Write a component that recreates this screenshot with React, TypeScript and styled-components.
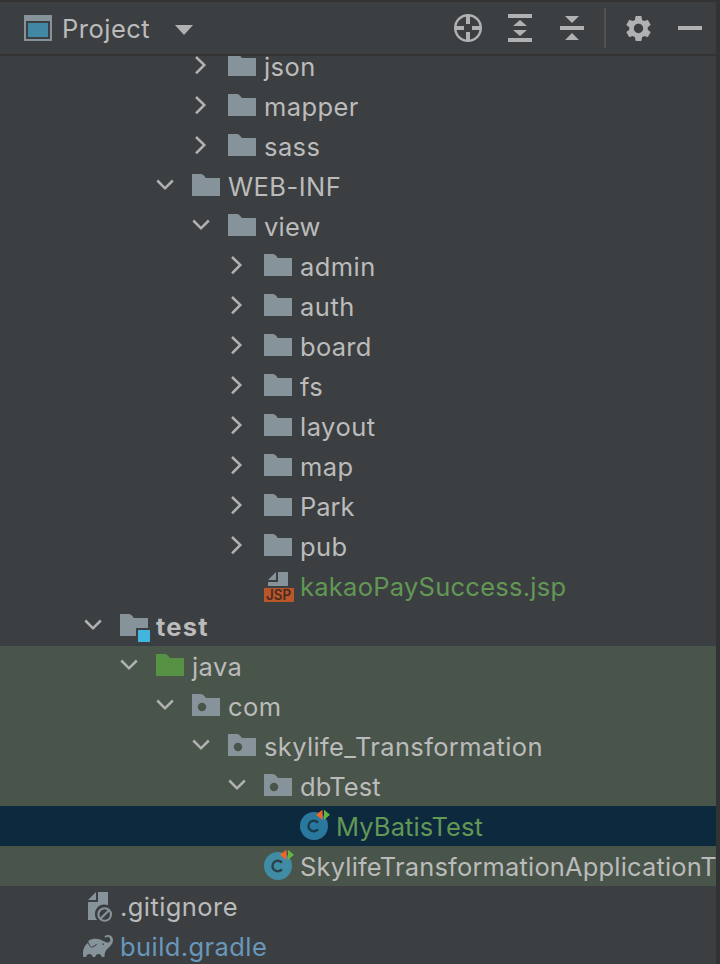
import React from "react";
import styled, { createGlobalStyle } from "styled-components";
import { MdSettings } from "react-icons/md";
import { SiGradle } from "react-icons/si";

const GlobalStyle = createGlobalStyle`
  * { box-sizing: border-box; }
  html, body, #root { height: 100%; }
  body { margin: 0; background: #3c3f41; overflow: hidden; }
`;

const Window = styled.div`
  display: flex;
  width: 720px;
  height: 964px;
  background: #3c3f41;
  color: #bbbbbb;
  font: 430 25.5px/40px Inter, "Noto Sans", sans-serif;
  overflow: hidden;
`;

const Panel = styled.div`
  flex: none;
  width: 716px;
  height: 100%;
  display: flex;
  flex-direction: column;
  overflow: hidden;
`;

const Edge = styled.div`
  flex: none;
  width: 4px;
  background: #313335;
  border-left: 2px solid #323232;
`;

const Header = styled.header`
  flex: none;
  height: 56px;
  display: flex;
  align-items: center;
  border-top: 2px solid #323232;
  border-bottom: 2px solid #323232;
  padding-left: 24px;
`;

const Title = styled.span`
  width: 88px;
  margin-left: 10px;
  padding-top: 2px;
  letter-spacing: 0.5px;
`;

const Arrow = styled.svg`
  display: block;
  margin: 4px 0 0 25px;
`;

const Tools = styled.div`
  display: flex;
  align-items: center;
  margin-left: auto;
  height: 100%;
`;

const Tool = styled.div`
  width: 52px;
  height: 32px;
  display: grid;
  place-items: center;
  color: #afb1b3;
  svg { display: block; }
`;

const Divider = styled.div`
  width: 2px;
  height: 40px;
  margin: 0 6px 0 6px;
  background: #515151;
`;

const Tree = styled.main`
  flex: 1;
  min-height: 0;
  overflow: hidden;
`;

const TreeRows = styled.div`
  margin-top: -10px;
`;

const Row = styled.div<{ $indent: number; $tone?: "test" | "selected" }>`
  height: 40px;
  display: flex;
  padding-left: ${(p) => p.$indent - 36}px;
  background: ${(p) =>
    p.$tone === "test" ? "#49544a" : p.$tone === "selected" ? "#0d293e" : "transparent"};
`;

const Slot = styled.div`
  flex: none;
  width: 36px;
  height: 40px;
  svg { display: block; overflow: visible; }
`;

const GradleMark = styled.div`
  margin-left: -1px;
  padding-top: 5px;
  color: #87939a;
`;

const Label = styled.span<{ $color?: string; $bold?: boolean; $spacing?: number }>`
  white-space: nowrap;
  padding-top: 1px;
  color: ${(p) => p.$color ?? "#bbbbbb"};
  font-weight: ${(p) => (p.$bold ? 700 : 430)};
  letter-spacing: ${(p) => p.$spacing ?? 0.42}px;
`;

const Chevron = ({ open }: { open: boolean }) => (
  <svg width="36" height="40" fill="none" stroke="#afb1b3" strokeWidth="2.5">
    <path d={open ? "M1.3 14.5L9 22.3L16.8 14.5" : "M4 11L12.3 19L4 27.3"} />
  </svg>
);

type IconKind = "folder" | "module" | "source" | "package" | "jsp" | "class" | "ignored" | "gradle";

const folderPath = "M0 8H8C10 8 11 8.6 12 9.7L14 12H28V30H0Z";

const NodeIcon = ({ kind, selected }: { kind: IconKind; selected?: boolean }) => {
  if (kind === "gradle") {
    return <GradleMark><SiGradle size={30} /></GradleMark>;
  }
  return (
    <svg width="36" height="40">
      {kind === "folder" && <path d={folderPath} fill="#87939a" />}
      {kind === "source" && <path d={folderPath} fill="#579143" />}
      {kind === "module" && (
        <>
          <path d="M0 8H8C10 8 11 8.6 12 9.7L14 12H28V22H16V30H0Z" fill="#87939a" />
          <rect x="18" y="24" width="12" height="12" fill="#41b5e0" />
        </>
      )}
      {kind === "package" && (
        <>
          <path d={folderPath} fill="#87939a" />
          <circle cx="10" cy="21" r="4.2" fill="#49544a" />
        </>
      )}
      {kind === "jsp" && (
        <>
          <path d="M12 6V14H4ZM14 6H24V20H4V16H14Z" fill="#87939a" />
          <rect y="22" width="30" height="14" fill="#b9562a" />
          <text x="2" y="34" textLength="25" lengthAdjust="spacingAndGlyphs" fontSize="14" fontWeight="600" fill="#492b20">JSP</text>
        </>
      )}
      {kind === "class" && (
        <>
          <circle cx="14" cy="20" r="14" fill={selected ? "#2a789d" : "#418ca5"} />
          <path d="M18 16.8A5.3 5.3 0 1 0 18 23.2" fill="none" stroke={selected ? "#183c4c" : "#28434b"} strokeWidth="2.4" />
          <path d="M22.5 3.8V14L16 8.8Z" fill="#f26522" />
          <path d="M24 3.8V14L30 8.8Z" fill="#62b543" />
        </>
      )}
      {kind === "ignored" && (
        <>
          <path d="M12 6V14H4ZM14 6H24V19.2A9.5 9.5 0 0 0 13 34H4V16H14Z" fill="#87939a" />
          <circle cx="20.7" cy="28.5" r="6.3" fill="none" stroke="#87939a" strokeWidth="2.1" />
          <path d="M16.5 32.7L25 24.2" stroke="#87939a" strokeWidth="2.1" />
        </>
      )}
    </svg>
  );
};

interface Node {
  name: string;
  icon: IconKind;
  indent: number;
  open?: boolean;
  tone?: "test" | "selected";
  color?: string;
  bold?: boolean;
  spacing?: number;
}

const green = "#629755";

const nodes: Node[] = [
  { name: "json", icon: "folder", indent: 228, open: false },
  { name: "mapper", icon: "folder", indent: 228, open: false },
  { name: "sass", icon: "folder", indent: 228, open: false },
  { name: "WEB-INF", icon: "folder", indent: 192, open: true, spacing: 0.45 },
  { name: "view", icon: "folder", indent: 228, open: true, spacing: 0.2 },
  { name: "admin", icon: "folder", indent: 264, open: false },
  { name: "auth", icon: "folder", indent: 264, open: false, spacing: 0.5 },
  { name: "board", icon: "folder", indent: 264, open: false, spacing: 0.3 },
  { name: "fs", icon: "folder", indent: 264, open: false },
  { name: "layout", icon: "folder", indent: 264, open: false, spacing: 0.5 },
  { name: "map", icon: "folder", indent: 264, open: false },
  { name: "Park", icon: "folder", indent: 264, open: false, spacing: -0.05 },
  { name: "pub", icon: "folder", indent: 264, open: false },
  { name: "kakaoPaySuccess.jsp", icon: "jsp", indent: 264, color: green, spacing: 0.26 },
  { name: "test", icon: "module", indent: 120, open: true, bold: true, spacing: 1.2 },
  { name: "java", icon: "source", indent: 156, open: true, tone: "test" },
  { name: "com", icon: "package", indent: 192, open: true, tone: "test" },
  { name: "skylife_Transformation", icon: "package", indent: 228, open: true, tone: "test", spacing: 0.36 },
  { name: "dbTest", icon: "package", indent: 264, open: true, tone: "test", spacing: 0.03 },
  { name: "MyBatisTest", icon: "class", indent: 300, tone: "selected", color: green, spacing: 0.11 },
  { name: "SkylifeTransformationApplicationT", icon: "class", indent: 264, tone: "test", spacing: 0.16 },
  { name: ".gitignore", icon: "ignored", indent: 84, spacing: 0.42 },
  { name: "build.gradle", icon: "gradle", indent: 84, color: "#6897bb" },
];

const TreeNode = ({ node }: { node: Node }) => (
  <Row $indent={node.indent} $tone={node.tone}>
    <Slot>{node.open !== undefined && <Chevron open={node.open} />}</Slot>
    <Slot><NodeIcon kind={node.icon} selected={node.tone === "selected"} /></Slot>
    <Label $color={node.color} $bold={node.bold} $spacing={node.spacing}>{node.name}</Label>
  </Row>
);

export default function App() {
  return (
    <>
      <GlobalStyle />
      <Window>
        <Panel>
          <Header>
            <svg width="28" height="26">
              <path d="M0 0H28V26H0ZM2 6V24H26V6Z" fill="#87939a" fillRule="evenodd" />
              <rect x="4" y="8" width="20" height="14" fill="#4088a3" />
            </svg>
            <Title>Project</Title>
            <Arrow width="18" height="10"><path d="M0 0H18L9 10Z" fill="#afb1b3" /></Arrow>
            <Tools>
              <Tool>
                <svg width="28" height="28" fill="none" stroke="#afb1b3">
                  <circle cx="14" cy="14" r="12.8" strokeWidth="2.4" />
                  <path d="M14 1V10M14 18V27M1 14H10M18 14H27" strokeWidth="4" />
                </svg>
              </Tool>
              <Tool>
                <svg width="24" height="28" fill="#afb1b3">
                  <path d="M0 0H24V4H0ZM0 24H24V28H0ZM12 6L19 12H5ZM5 16H19L12 22Z" />
                </svg>
              </Tool>
              <Tool>
                <svg width="24" height="24" fill="#afb1b3">
                  <path d="M0 10H24V14H0ZM5 0H19L12 7ZM12 17L19 24H5Z" />
                </svg>
              </Tool>
              <Divider />
              <Tool><MdSettings size={31} /></Tool>
              <Tool><svg width="24" height="4"><rect width="24" height="4" fill="#afb1b3" /></svg></Tool>
            </Tools>
          </Header>
          <Tree>
            <TreeRows>
              {nodes.map((node) => <TreeNode key={node.name} node={node} />)}
            </TreeRows>
          </Tree>
        </Panel>
        <Edge />
      </Window>
    </>
  );
}
